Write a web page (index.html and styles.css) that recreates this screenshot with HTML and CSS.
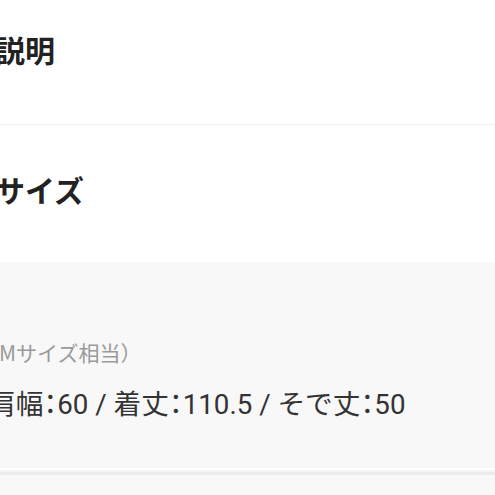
FILE: index.html
```html
<!DOCTYPE html>
<html lang="ja">
<head>
<meta charset="utf-8">
<title>商品説明</title>
<link rel="stylesheet" href="styles.css">
</head>
<body>
<div class="page">
  <section class="sec sec-desc">
    <h2 class="title title-desc">商品説明</h2>
  </section>
  <section class="sec sec-size">
    <h2 class="title title-size">サイズ</h2>
  </section>
  <section class="sec sec-detail">
    <p class="note">（Mサイズ相当）</p>
    <p class="spec">肩幅<span class="colon">：</span>60 / 着丈<span class="colon">：</span>110.5 / そで丈<span class="colon">：</span>50</p>
  </section>
  <div class="divider"></div>
  <div class="rest"></div>
</div>
</body>
</html>
```
FILE: styles.css
```css
html, body {
  margin: 0;
  padding: 0;
  height: 100%;
  overflow: hidden;
}
body {
  font-family: Roboto, "Noto Sans CJK JP", sans-serif;
  background: #ffffff;
}
.page {
  display: flex;
  flex-direction: column;
  min-height: 100%;
}
.sec {
  white-space: nowrap;
}
.title {
  margin: 0;
  font-size: 30px;
  line-height: 40px;
  font-weight: 700;
  color: #222222;
}
.sec-desc {
  padding: 32px 0 52px;
  border-bottom: 1px solid #efefef;
}
.title-desc {
  margin-left: -65px;
}
.sec-size {
  padding: 47px 0 50px;
}
.title-size {
  margin-left: -5px;
}
.sec-detail {
  background: #f8f8f8;
  padding: 75px 0 47px;
}
.note {
  margin: 0 0 0 -22px;
  font-family: "Noto Sans CJK JP", sans-serif;
  font-size: 21px;
  line-height: 30px;
  color: #9a9a9a;
}
.spec {
  margin: 19px 0 0 -12px;
  font-size: 27.7px;
  line-height: 32px;
  color: #333333;
}
.colon {
  font-family: "Noto Sans CJK JP", sans-serif;
  font-feature-settings: "halt";
}
.divider {
  height: 2px;
  background: #ffffff;
  border-bottom: 2px solid #f6f6f6;
  box-shadow: 0 3px 0 #ececec;
  margin-bottom: 3px;
}
.rest {
  flex: 1;
  background: #f8f8f8;
}
```
